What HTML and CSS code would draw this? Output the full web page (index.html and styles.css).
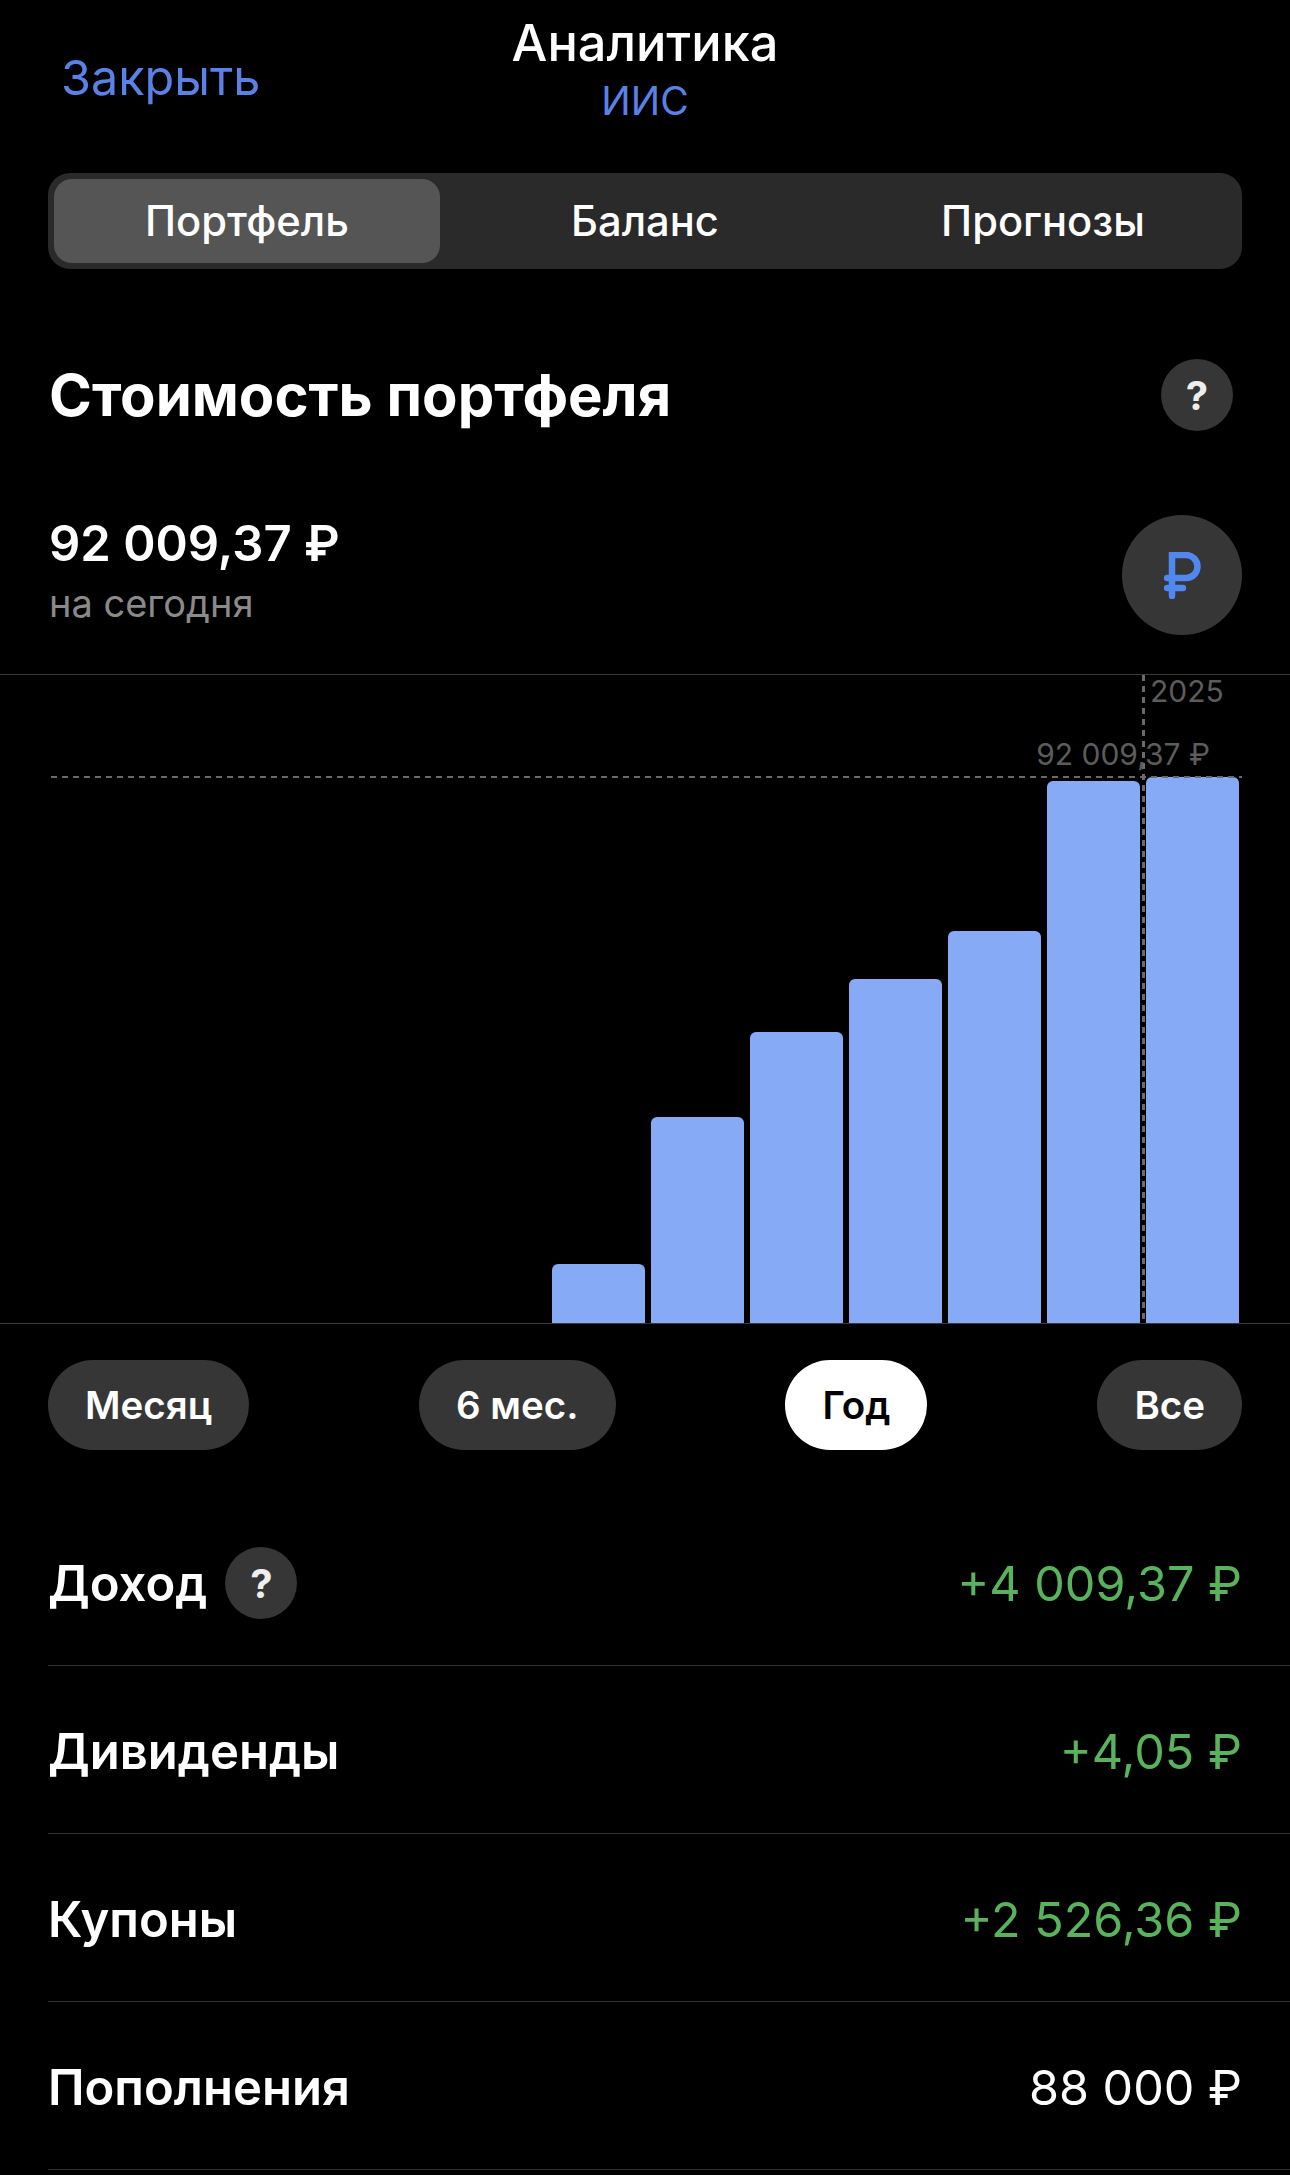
FILE: index.html
```html
<!DOCTYPE html>
<html lang="ru">
<head>
  <meta charset="UTF-8">
  <meta name="viewport" content="width=device-width, initial-scale=1.0">
  <title>Аналитика</title>
  <link rel="stylesheet" href="styles.css">
</head>
<body>
  <header class="topbar">
    <a class="close">Закрыть</a>
    <div class="topbar-title">
      <div class="title-main">Аналитика</div>
      <div class="title-sub">ИИС</div>
    </div>
  </header>

  <nav class="segments">
    <div class="segment active">Портфель</div>
    <div class="segment">Баланс</div>
    <div class="segment">Прогнозы</div>
  </nav>

  <div class="section-head">
    <h2>Стоимость портфеля</h2>
    <div class="help help-top">?</div>
  </div>

  <div class="summary">
    <div class="summary-text">
      <div class="amount">92 009,37 ₽</div>
      <div class="amount-date">на сегодня</div>
    </div>
    <div class="currency">
      <svg width="37" height="47" viewBox="0 0 37 47" fill="none" stroke="#5087f0" stroke-width="6.5" stroke-linecap="round">
        <path d="M8 44V3H22A11.5 11.5 0 0 1 22 26H3"/>
        <path d="M3 36H19"/>
      </svg>
    </div>
  </div>

  <div class="chart">
    <div class="bars">
      <div class="bar" style="height: 59px"></div>
      <div class="bar" style="height: 206px"></div>
      <div class="bar" style="height: 291px"></div>
      <div class="bar" style="height: 344px"></div>
      <div class="bar" style="height: 392px"></div>
      <div class="bar" style="height: 542px"></div>
      <div class="bar" style="height: 546px"></div>
    </div>
    <div class="line-h"></div>
    <div class="line-v"></div>
    <div class="label label-year">2025</div>
    <div class="label label-value">92 009,37 ₽</div>
  </div>

  <div class="periods">
    <div class="period">Месяц</div>
    <div class="period">6 мес.</div>
    <div class="period active">Год</div>
    <div class="period">Все</div>
  </div>

  <div class="rows">
    <div class="row">
      <div class="row-name">Доход <span class="help">?</span></div>
      <div class="row-value plus">+4 009,37 ₽</div>
    </div>
    <div class="row">
      <div class="row-name">Дивиденды</div>
      <div class="row-value plus">+4,05 ₽</div>
    </div>
    <div class="row">
      <div class="row-name">Купоны</div>
      <div class="row-value plus">+2 526,36 ₽</div>
    </div>
    <div class="row">
      <div class="row-name">Пополнения</div>
      <div class="row-value">88 000 ₽</div>
    </div>
  </div>
</body>
</html>
```

FILE: styles.css
```css
body {
  margin: 0;
  height: 2175px;
  overflow: hidden;
  background-color: #000;
  color: #fff;
  font-family: Inter, "Noto Sans", sans-serif;
}

.topbar {
  display: grid;
  grid-template-columns: minmax(0, 1fr) auto minmax(0, 1fr);
  align-items: center;
  height: 173px;
}
.close {
  margin: -18px 0 0 61px;
  font-size: 48.5px;
  color: #5a82e6;
}
.topbar-title {
  text-align: center;
  margin-top: -32px;
}
.title-main {
  font-size: 50.5px;
  font-weight: 500;
  line-height: 60px;
}
.title-sub {
  font-size: 39px;
  line-height: 55px;
  color: #5a82e6;
}

.segments {
  display: grid;
  grid-template-columns: 392px 398px 398px;
  margin: 0 48px;
  height: 96px;
  padding: 6px 0 6px 6px;
  box-sizing: border-box;
  background-color: #2a2a2a;
  border-radius: 22px;
}
.segment {
  display: flex;
  align-items: center;
  justify-content: center;
  font-size: 41.7px;
  font-weight: 500;
  border-radius: 18px;
}
.segment.active {
  margin-right: 6px;
  background-color: #555;
}

.section-head {
  display: flex;
  align-items: center;
  justify-content: space-between;
  height: 126px;
  margin-top: 63px;
  padding: 0 57px 0 49px;
}
h2 {
  margin: 0;
  font-size: 58px;
  font-weight: 700;
}
.help {
  display: inline-flex;
  align-items: center;
  justify-content: center;
  width: 72px;
  height: 72px;
  border-radius: 50%;
  background-color: #363636;
  font-size: 40px;
  font-weight: 700;
  color: #eee;
}

.summary {
  display: flex;
  align-items: center;
  justify-content: space-between;
  height: 217px;
  padding: 18px 48px 0 49px;
  box-sizing: border-box;
  border-bottom: 1px solid #3a3a3a;
}
.summary-text {
  margin-top: -4px;
}
.amount {
  font-size: 49px;
  font-weight: 600;
  line-height: 60px;
}
.amount-date {
  font-size: 38px;
  line-height: 58px;
  color: #8a8a8a;
}
.currency {
  display: flex;
  align-items: center;
  justify-content: center;
  width: 120px;
  height: 120px;
  border-radius: 50%;
  background-color: #363636;
}

.chart {
  position: relative;
  height: 648px;
  border-bottom: 1px solid #3a3a3a;
}
.bars {
  display: flex;
  align-items: flex-end;
  justify-content: flex-end;
  gap: 6px;
  height: 100%;
  padding-right: 51px;
}
.bar {
  width: 93px;
  background-color: #86aaf5;
  border-radius: 6px 6px 0 0;
}
.line-h {
  position: absolute;
  left: 51px;
  top: 101px;
  width: 1191px;
  height: 2px;
  background: repeating-linear-gradient(90deg, #6a6a6a 0 6px, transparent 6px 11px);
}
.line-v {
  position: absolute;
  left: 1142px;
  top: 0;
  width: 3px;
  height: 100%;
  background: repeating-linear-gradient(180deg, #6a6a6a 0 6px, transparent 6px 11px);
}
.label {
  position: absolute;
  font-size: 30px;
  line-height: 36px;
  color: #5c5c5c;
}
.label-year {
  left: 1150px;
  top: -2px;
}
.label-value {
  right: 80px;
  top: 61px;
}

.periods {
  display: flex;
  justify-content: space-between;
  margin: 36px 48px 0;
}
.period {
  display: flex;
  align-items: center;
  height: 90px;
  padding: 0 37px;
  border-radius: 45px;
  background-color: #363636;
  font-size: 38.5px;
  font-weight: 600;
}
.period.active {
  background-color: #fff;
  color: #000;
}

.rows {
  margin: 48px 0 0 48px;
}
.row {
  display: flex;
  align-items: center;
  justify-content: space-between;
  height: 168px;
  padding: 3px 48px 0 0;
  box-sizing: border-box;
  border-bottom: 1px solid #333;
}
.row-name {
  display: flex;
  align-items: center;
  gap: 18px;
  font-size: 49px;
  font-weight: 600;
}
.row-value {
  font-size: 48.5px;
}
.plus {
  color: #58b35c;
}
```
